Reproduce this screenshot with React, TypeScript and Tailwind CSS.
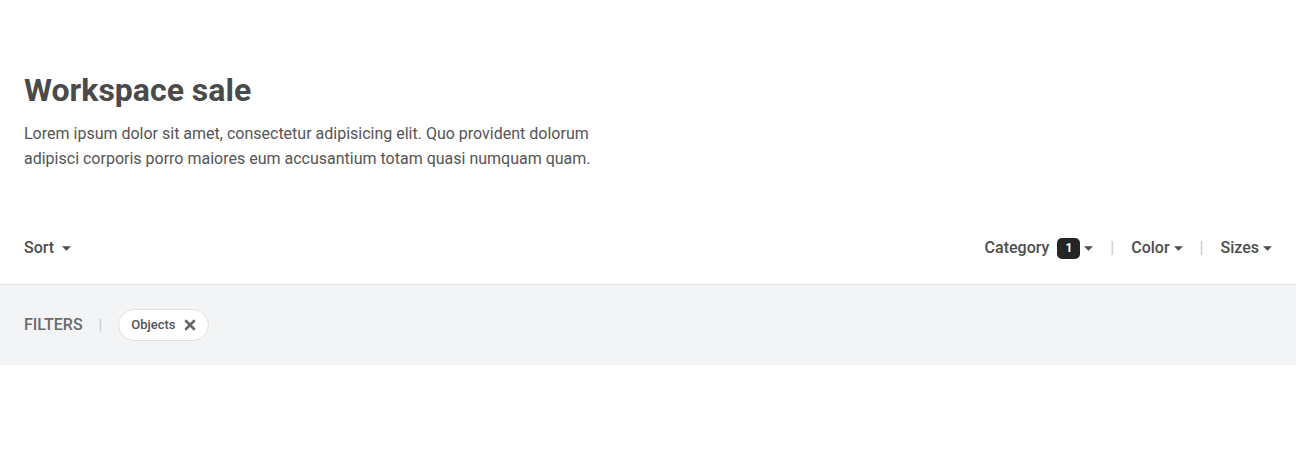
import React from "react";

function Caret({ className = "" }: { className?: string }) {
  return (
    <svg viewBox="0 0 10 5" className={"h-[5px] w-[9px] fill-current " + className}>
      <path d="M0 0h10L5 5z" />
    </svg>
  );
}

function Dropdown({ label, badge }: { label: string; badge?: string }) {
  return (
    <button className="flex items-center text-[16px] font-medium text-[#4d4d4d]">
      {label}
      {badge && (
        <span className="ml-2 flex h-[21px] w-[23px] items-center justify-center rounded-[5px] bg-[#252525] text-[12px] font-bold text-white">
          {badge}
        </span>
      )}
      <Caret className="ml-1 text-[#4d4d4d]" />
    </button>
  );
}

function Sep() {
  return <span className="text-[16px] text-[#c8c8c8]">|</span>;
}

export default function App() {
  return (
    <div className="min-h-[460px] bg-white font-['Roboto',sans-serif]">
      <div className="px-6 pt-[72px]">
        <h1 className="text-[32px] font-bold leading-[36px] text-[#4a4a4a]">Workspace sale</h1>
        <p className="mt-[13px] max-w-[600px] text-[16px] leading-[25px] text-[#555555]">
          Lorem ipsum dolor sit amet, consectetur adipisicing elit. Quo provident dolorum adipisci corporis porro
          maiores eum accusantium totam quasi numquam quam.
        </p>
      </div>

      <div className="mt-[65px] flex items-center justify-between border-b border-[#e2e2e2] px-6 pb-[24px] leading-[24px]">
        <button className="flex items-center text-[16px] font-medium text-[#4d4d4d]">
          Sort
          <Caret className="ml-2" />
        </button>
        <div className="flex items-center gap-[17px]">
          <Dropdown label="Category" badge="1" />
          <Sep />
          <Dropdown label="Color" />
          <Sep />
          <Dropdown label="Sizes" />
        </div>
      </div>

      <div className="flex items-center bg-[#f3f4f6] px-6 py-6">
        <span className="text-[16px] font-medium uppercase text-[#6b6b6b]">Filters</span>
        <span className="ml-4 text-[15px] text-[#c8c8c8]">|</span>
        <span className="ml-4 flex h-8 items-center rounded-full border border-[#e0e0e0] bg-white pl-3 pr-3 text-[13px] font-medium text-[#555555]">
          Objects
          <svg viewBox="0 0 12 12" className="ml-2 h-[12px] w-[12px] text-[#666666]">
            <path d="M2 2l8 8M10 2l-8 8" stroke="currentColor" strokeWidth="2.6" strokeLinecap="round" />
          </svg>
        </span>
      </div>
    </div>
  );
}
